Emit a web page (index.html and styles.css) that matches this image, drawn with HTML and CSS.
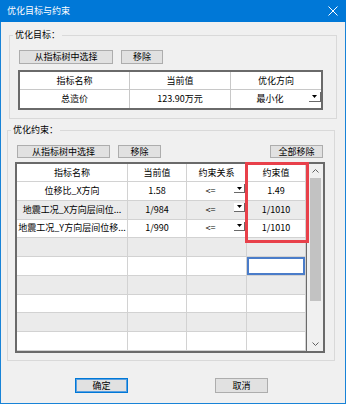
FILE: index.html
```html
<!DOCTYPE html>
<html lang="zh">
<head>
<meta charset="utf-8">
<title>优化目标与约束</title>
<link rel="stylesheet" href="styles.css">
</head>
<body>
<div class="window">
  <div class="titlebar">
    <span class="title">优化目标与约束</span>
    <svg class="close" width="10" height="10" viewBox="0 0 10 10"><path d="M0.5 0.5 L9.5 9.5 M9.5 0.5 L0.5 9.5" stroke="#fff" stroke-width="1" fill="none"/></svg>
  </div>
  <div class="client">
    <div class="group g1">
      <span class="legend">优化目标：</span>
      <div class="btnrow">
        <button class="btn b-pick1">从指标树中选择</button>
        <button class="btn b-rm1">移除</button>
      </div>
      <div class="t1">
        <div class="row head">
          <div class="cell c1">指标名称</div>
          <div class="cell c2">当前值</div>
          <div class="cell c3">优化方向</div>
        </div>
        <div class="row">
          <div class="cell c1">总造价</div>
          <div class="cell c2">123.90万元</div>
          <div class="cell c3 combo"><span class="ctext">最小化</span><span class="dd"><svg width="5" height="3" viewBox="0 0 5 3"><path d="M0 0 H5 L2.5 3 Z" fill="#000"/></svg></span></div>
        </div>
      </div>
    </div>

    <div class="group g2">
      <span class="legend">优化约束：</span>
      <div class="btnrow">
        <button class="btn b-pick2">从指标树中选择</button>
        <button class="btn b-rm2">移除</button>
        <button class="btn b-rmall">全部移除</button>
      </div>
      <div class="t2">
        <div class="t2grid">
          <div class="row head">
            <div class="cell d1">指标名称</div>
            <div class="cell d2">当前值</div>
            <div class="cell d3">约束关系</div>
            <div class="cell d4">约束值</div>
          </div>
          <div class="row">
            <div class="cell d1">位移比_X方向</div>
            <div class="cell d2">1.58</div>
            <div class="cell d3 combo"><span class="ctext">&lt;=</span><span class="dd"><svg width="5" height="3" viewBox="0 0 5 3"><path d="M0 0 H5 L2.5 3 Z" fill="#000"/></svg></span></div>
            <div class="cell d4">1.49</div>
          </div>
          <div class="row alt">
            <div class="cell d1">地震工况_X方向层间位...</div>
            <div class="cell d2">1/984</div>
            <div class="cell d3 combo"><span class="ctext">&lt;=</span><span class="dd"><svg width="5" height="3" viewBox="0 0 5 3"><path d="M0 0 H5 L2.5 3 Z" fill="#000"/></svg></span></div>
            <div class="cell d4">1/1010</div>
          </div>
          <div class="row">
            <div class="cell d1">地震工况_Y方向层间位移...</div>
            <div class="cell d2">1/990</div>
            <div class="cell d3 combo"><span class="ctext">&lt;=</span><span class="dd"><svg width="5" height="3" viewBox="0 0 5 3"><path d="M0 0 H5 L2.5 3 Z" fill="#000"/></svg></span></div>
            <div class="cell d4">1/1010</div>
          </div>
          <div class="row alt"><div class="cell d1"></div><div class="cell d2"></div><div class="cell d3"></div><div class="cell d4"></div></div>
          <div class="row"><div class="cell d1"></div><div class="cell d2"></div><div class="cell d3"></div><div class="cell d4 selected"></div></div>
          <div class="row alt"><div class="cell d1"></div><div class="cell d2"></div><div class="cell d3"></div><div class="cell d4"></div></div>
          <div class="row"><div class="cell d1"></div><div class="cell d2"></div><div class="cell d3"></div><div class="cell d4"></div></div>
          <div class="row alt"><div class="cell d1"></div><div class="cell d2"></div><div class="cell d3"></div><div class="cell d4"></div></div>
          <div class="row"><div class="cell d1"></div><div class="cell d2"></div><div class="cell d3"></div><div class="cell d4"></div></div>
        </div>
        <div class="vscroll">
          <div class="arrow"><svg width="7" height="4" viewBox="0 0 7 4"><path d="M0.5 3.5 L3.5 0.5 L6.5 3.5" stroke="#606060" stroke-width="1" fill="none"/></svg></div>
          <div class="track"><div class="thumb"></div></div>
          <div class="arrow"><svg width="7" height="4" viewBox="0 0 7 4"><path d="M0.5 0.5 L3.5 3.5 L6.5 0.5" stroke="#606060" stroke-width="1" fill="none"/></svg></div>
        </div>
        <div class="highlight"></div>
      </div>
    </div>

    <div class="footer">
      <button class="btn fbtn default">确定</button>
      <button class="btn fbtn">取消</button>
    </div>
  </div>
</div>
</body>
</html>
```

FILE: styles.css
```css
* { box-sizing: border-box; }
html, body { margin: 0; padding: 0; }
body {
  font-family: "Noto Sans CJK SC", "Noto Sans", sans-serif;
  font-size: 9px;
  color: #000;
  background: #f0f0f0;
}
.window {
  width: 346px;
  height: 404px;
  display: flex;
  flex-direction: column;
  background: #f0f0f0;
}
.titlebar {
  height: 22px;
  flex: none;
  background: #0078d7;
  color: #fff;
  display: flex;
  align-items: center;
  justify-content: space-between;
  padding: 0 8px 0 7px;
}
.title { line-height: 12px; }
.close { display: block; }
.client {
  flex: 1;
  border: 1px solid #1883d7;
  border-top: none;
}
.group {
  position: relative;
  border: 1px solid #d9d9d9;
}
.g1 {
  margin: 13px 0 0 8px;
  width: 328px;
  height: 84px;
  padding: 14px 0 0 9px;
}
.g2 {
  margin: 11px 0 0 6px;
  width: 328px;
  height: 231px;
  padding: 14px 0 0 9px;
}
.legend {
  position: absolute;
  top: -7px;
  left: 3px;
  padding: 0 2px;
  line-height: 12px;
  background: #f0f0f0;
}
.btnrow {
  display: flex;
  gap: 8px;
}
.btn {
  font: inherit;
  color: #000;
  margin: 0;
  padding: 0;
  background: #e1e1e1;
  border: 1px solid #adadad;
  display: flex;
  align-items: center;
  justify-content: center;
  line-height: 12px;
}
.g1 .btn { height: 14px; }
.g2 .btn { height: 13px; }
.b-pick1 { width: 94px; }
.b-rm1 { width: 42px; }
.b-pick2 { width: 93px; }
.b-rm2 { width: 43px; }
.b-rmall { width: 53px; margin-left: 101px; }

/* table 1 */
.t1 {
  margin: 6px 0 0 -1px;
  width: 305px;
  height: 40px;
  border: 2px solid #6a6a6a;
  background: #fff;
}
.row { display: flex; }
.cell {
  display: flex;
  align-items: center;
  justify-content: center;
  white-space: nowrap;
  overflow: hidden;
  line-height: 12px;
}
.t1 .row { height: 18px; border-bottom: 1px solid #c8c8c8; }
.t1 .row:last-child { border-bottom: none; }
.t1 .cell { border-right: 1px solid #c8c8c8; }
.t1 .c1 { width: 110px; }
.t1 .c2 { width: 101px; }
.t1 .c3 { width: 90px; border-right: none; }
.combo { justify-content: flex-start; align-items: center; }
.ctext { flex: 1; text-align: center; }
.dd {
  width: 11px;
  height: 9px;
  margin-right: 1px;
  align-self: flex-start;
  margin-top: 2px;
  background: #fff;
  border-right: 1px solid #696969;
  border-bottom: 1px solid #696969;
  display: flex;
  align-items: center;
  justify-content: center;
}
.dd svg { display: block; }
.t1 .dd { width: 12px; height: 10px; margin-right: 0; margin-top: 2px; }

/* table 2 */
.t2 {
  position: relative;
  margin: 4px 0 0 -2px;
  width: 310px;
  height: 191px;
  border: 2px solid #6a6a6a;
  display: flex;
  background: #fff;
}
.t2grid {
  width: 290px;
  height: 100%;
  overflow: hidden;
  border-right: 1px solid #6a6a6a;
}
.t2 .row { height: 18.75px; }
.t2 .row.head { height: 18px; background: #fff; }
.t2 .row.alt { background: #ebebeb; }
.t2 .cell {
  border-right: 1px solid #d2d2d2;
  border-bottom: 1px solid #d2d2d2;
}
.t2 .d1 { width: 111px; }
.t2 .d2 { width: 59px; }
.t2 .d3 { width: 60px; }
.t2 .d4 { width: 59px; }
.t2 .selected { box-shadow: inset 0 0 0 2px #4a7cc9; }
.vscroll {
  width: 16px;
  background: #f0f0f0;
  display: flex;
  flex-direction: column;
}
.arrow {
  height: 14px;
  display: flex;
  align-items: center;
  justify-content: center;
}
.arrow svg { display: block; }
.track { flex: 1; padding: 0 2px 0 3px; }
.thumb { height: 123px; background: #c2c2c2; }
.highlight {
  position: absolute;
  left: 228px;
  top: -2px;
  width: 64px;
  height: 81px;
  border: 3px solid #e8404a;
}

.footer {
  display: flex;
  margin: 17px 0 0 74px;
  gap: 87px;
}
.fbtn { width: 53px; height: 15px; }
.fbtn.default { border-color: #0078d7; box-shadow: inset 0 0 0 1px #5aa0e0; }
```
